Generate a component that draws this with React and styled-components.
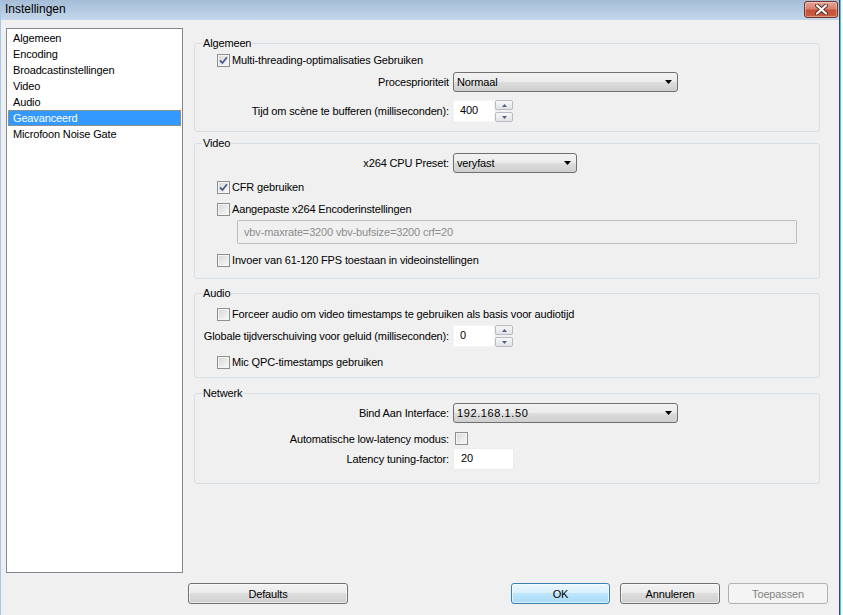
import React from 'react';
import styled, { createGlobalStyle } from 'styled-components';

const GlobalStyle = createGlobalStyle`
  html, body { margin: 0; padding: 0; background: #ffffff; }
  body {
    font-family: "Liberation Sans", Arial, sans-serif;
    font-size: 11px;
    letter-spacing: -0.15px;
    color: #000;
  }
  * { box-sizing: border-box; }
`;

const Window = styled.div`
  width: 840px;
  height: 615px;
  display: flex;
  flex-direction: column;
  background: #f0f0f0;
  border-left: 1px solid #a8c6ea;
  border-right: 1px solid #35485c;
  box-shadow: 1px 0 0 #48c6f0;
  overflow: hidden;
`;

const TitleBar = styled.div`
  height: 20px;
  flex: none;
  display: flex;
  align-items: flex-start;
  justify-content: space-between;
  padding-left: 4px;
  background: linear-gradient(#a5bcd7, #c4d7eb);
`;

const Title = styled.span`
  font-size: 12px;
  line-height: 19px;
  letter-spacing: 0;
`;

const CloseButton = styled.div`
  width: 34px;
  height: 17px;
  margin: 1px 1px 0 0;
  display: flex;
  align-items: center;
  justify-content: center;
  border: 1px solid #7a3329;
  border-radius: 3px;
  background: linear-gradient(#e3a497 0%, #d7826f 45%, #c65037 55%, #c9603f 100%);
  box-shadow: inset 0 0 0 1px rgba(255, 255, 255, 0.35);
`;

const Body = styled.div`
  display: flex;
  gap: 11px;
  padding: 8px 19px 0 5px;
`;

const ListBox = styled.ul`
  list-style: none;
  margin: 0;
  width: 177px;
  height: 545px;
  flex: none;
  padding: 1px 1px 0;
  background: #fff;
  border: 1px solid #828790;
`;

const ListItem = styled.li`
  height: 16px;
  line-height: 14px;
  padding-left: 4px;
  border: 1px ${(p) => (p.$selected ? 'dotted #d98b2b' : 'solid transparent')};
  background: ${(p) => (p.$selected ? '#3399ff' : 'transparent')};
  color: ${(p) => (p.$selected ? '#fff' : '#000')};
  white-space: nowrap;
`;

const Groups = styled.div`
  width: 626px;
  display: flex;
  flex-direction: column;
`;

const Group = styled.div`
  position: relative;
  height: ${(p) => p.$h}px;
  margin-top: ${(p) => p.$mt}px;
  border: 1px solid #d5dfe5;
  border-radius: 3px;
  display: flex;
  flex-direction: column;
`;

const Legend = styled.span`
  position: absolute;
  top: -8px;
  left: 7px;
  padding: 0 1px;
  line-height: 14px;
  background: #f0f0f0;
`;

const CheckRow = styled.label`
  height: 16px;
  margin-top: ${(p) => p.$mt}px;
  padding-left: 22px;
  display: flex;
  align-items: center;
  gap: 2px;
  white-space: nowrap;
`;

const Field = styled.div`
  margin-top: ${(p) => p.$mt}px;
  display: grid;
  grid-template-columns: 254px auto;
  column-gap: 4px;
  align-items: center;
  justify-items: start;
`;

const FieldLabel = styled.span`
  justify-self: end;
  white-space: nowrap;
`;

const Box = styled.span`
  width: 13px;
  height: 13px;
  flex: none;
  margin-left: ${(p) => p.$ml || 0}px;
  display: flex;
  align-items: center;
  justify-content: center;
  border: 1px solid #8e8f8f;
  background: linear-gradient(135deg, #d6d6d6, #fbfbfb);
  box-shadow: inset 0 0 0 1px #f4f4f4;
`;

const SelectBox = styled.div`
  width: ${(p) => p.$w}px;
  height: 20px;
  display: flex;
  align-items: center;
  justify-content: space-between;
  padding: 0 5px 0 3px;
  border: 1px solid #707070;
  border-radius: 3px;
  background: linear-gradient(#f2f2f2 0%, #ebebeb 50%, #dddddd 50%, #cfcfcf 100%);
  letter-spacing: ${(p) => (p.$spaced ? '0.6px' : '-0.15px')};
`;

const SpinWrap = styled.div`
  display: flex;
  height: 22px;
`;

const SpinInput = styled.div`
  width: 42px;
  height: 22px;
  padding: 3px 0 0 6px;
  background: #fff;
  border: 1px solid #f4f4f4;
`;

const SpinButtons = styled.div`
  width: 18px;
  display: flex;
  flex-direction: column;
  justify-content: space-between;
`;

const SpinButton = styled.div`
  height: 10px;
  display: flex;
  align-items: center;
  justify-content: center;
  border: 1px solid #b8bcc2;
  border-radius: 2px;
  background: linear-gradient(#f7f7f7, #e1e3e6);
`;

const LineEdit = styled.div`
  width: ${(p) => p.$w}px;
  height: 22px;
  padding: 3px 0 0 7px;
  background: #fff;
  border: 1px solid #ececec;
`;

const DisabledEdit = styled.div`
  width: 560px;
  height: 24px;
  margin-top: ${(p) => p.$mt}px;
  margin-left: 42px;
  padding-left: 6px;
  display: flex;
  align-items: center;
  border: 1px solid #bdbdbd;
  border-radius: 2px;
  background: #f0f0f0;
  color: #8d8d8d;
`;

const Footer = styled.div`
  display: flex;
  margin-top: 10px;
  padding: 0 11px 0 187px;
`;

const Button = styled.div`
  width: ${(p) => p.$w}px;
  height: 21px;
  margin-left: ${(p) => p.$ml || 0};
  display: flex;
  align-items: center;
  justify-content: center;
  border: 1px solid ${(p) => (p.$default ? '#3c7fb1' : p.$disabled ? '#adb2b5' : '#707070')};
  border-radius: 3px;
  color: ${(p) => (p.$disabled ? '#838383' : '#000')};
  background: ${(p) =>
    p.$default
      ? 'linear-gradient(#eaf6fd 0%, #d9f0fc 50%, #bee6fd 50%, #a7d9f5 100%)'
      : p.$disabled
      ? '#f4f4f4'
      : 'linear-gradient(#f2f2f2 0%, #ebebeb 50%, #dddddd 50%, #cfcfcf 100%)'};
  box-shadow: ${(p) => (p.$disabled ? 'none' : 'inset 0 0 0 1px rgba(255,255,255,0.6)')};
`;

function Checkbox({ checked, ml }) {
  return (
    <Box $ml={ml}>
      {checked && (
        <svg width="9" height="9" viewBox="0 0 9 9">
          <path d="M1 4.5 L3.5 7 L8 1.2" fill="none" stroke="#4a5d8f" strokeWidth="1.8" />
        </svg>
      )}
    </Box>
  );
}

function Select({ w, value, spaced }) {
  return (
    <SelectBox $w={w} $spaced={spaced}>
      <span>{value}</span>
      <svg width="7" height="4" viewBox="0 0 7 4">
        <path d="M0 0 H7 L3.5 4 Z" fill="#000" />
      </svg>
    </SelectBox>
  );
}

function Spin({ value }) {
  return (
    <SpinWrap>
      <SpinInput>{value}</SpinInput>
      <SpinButtons>
        <SpinButton>
          <svg width="5" height="3" viewBox="0 0 5 3"><path d="M0 3 H5 L2.5 0 Z" fill="#4d6185" /></svg>
        </SpinButton>
        <SpinButton>
          <svg width="5" height="3" viewBox="0 0 5 3"><path d="M0 0 H5 L2.5 3 Z" fill="#4d6185" /></svg>
        </SpinButton>
      </SpinButtons>
    </SpinWrap>
  );
}

const pages = [
  'Algemeen',
  'Encoding',
  'Broadcastinstellingen',
  'Video',
  'Audio',
  'Geavanceerd',
  'Microfoon Noise Gate',
];

export default function App() {
  return (
    <>
      <GlobalStyle />
      <Window>
        <TitleBar>
          <Title>Instellingen</Title>
          <CloseButton>
            <svg width="13" height="11" viewBox="0 0 13 11">
              <path d="M2 1.5 L11 9.5 M11 1.5 L2 9.5" stroke="#5b2a22" strokeWidth="4" strokeLinecap="round" />
              <path d="M2 1.5 L11 9.5 M11 1.5 L2 9.5" stroke="#fff" strokeWidth="2.2" strokeLinecap="round" />
            </svg>
          </CloseButton>
        </TitleBar>

        <Body>
          <ListBox>
            {pages.map((p) => (
              <ListItem key={p} $selected={p === 'Geavanceerd'}>{p}</ListItem>
            ))}
          </ListBox>

          <Groups>
            <Group $mt={15} $h={89}>
              <Legend>Algemeen</Legend>
              <CheckRow $mt={8}>
                <Checkbox checked />
                Multi-threading-optimalisaties Gebruiken
              </CheckRow>
              <Field $mt={4}>
                <FieldLabel>Procesprioriteit</FieldLabel>
                <Select w={225} value="Normaal" />
              </Field>
              <Field $mt={8}>
                <FieldLabel>Tijd om scène te bufferen (milliseconden):</FieldLabel>
                <Spin value="400" />
              </Field>
            </Group>

            <Group $mt={11} $h={136}>
              <Legend>Video</Legend>
              <Field $mt={9}>
                <FieldLabel>x264 CPU Preset:</FieldLabel>
                <Select w={124} value="veryfast" />
              </Field>
              <CheckRow $mt={6}>
                <Checkbox checked />
                CFR gebruiken
              </CheckRow>
              <CheckRow $mt={6}>
                <Checkbox />
                Aangepaste x264 Encoderinstellingen
              </CheckRow>
              <DisabledEdit $mt={3}>vbv-maxrate=3200 vbv-bufsize=3200 crf=20</DisabledEdit>
              <CheckRow $mt={8}>
                <Checkbox />
                Invoer van 61-120 FPS toestaan in videoinstellingen
              </CheckRow>
            </Group>

            <Group $mt={14} $h={85}>
              <Legend>Audio</Legend>
              <CheckRow $mt={12}>
                <Checkbox />
                Forceer audio om video timestamps te gebruiken als basis voor audiotijd
              </CheckRow>
              <Field $mt={3}>
                <FieldLabel>Globale tijdverschuiving voor geluid (milliseconden):</FieldLabel>
                <Spin value="0" />
              </Field>
              <CheckRow $mt={7}>
                <Checkbox />
                Mic QPC-timestamps gebruiken
              </CheckRow>
            </Group>

            <Group $mt={15} $h={91}>
              <Legend>Netwerk</Legend>
              <Field $mt={9}>
                <FieldLabel>Bind Aan Interface:</FieldLabel>
                <Select w={225} value="192.168.1.50" spaced />
              </Field>
              <Field $mt={9}>
                <FieldLabel>Automatische low-latency modus:</FieldLabel>
                <Checkbox ml={2} />
              </Field>
              <Field $mt={3}>
                <FieldLabel>Latency tuning-factor:</FieldLabel>
                <LineEdit $w={61}>20</LineEdit>
              </Field>
            </Group>
          </Groups>
        </Body>

        <Footer>
          <Button $w={160}>Defaults</Button>
          <Button $w={99} $ml="auto" $default>OK</Button>
          <Button $w={100} $ml="10px">Annuleren</Button>
          <Button $w={100} $ml="8px" $disabled>Toepassen</Button>
        </Footer>
      </Window>
    </>
  );
}
